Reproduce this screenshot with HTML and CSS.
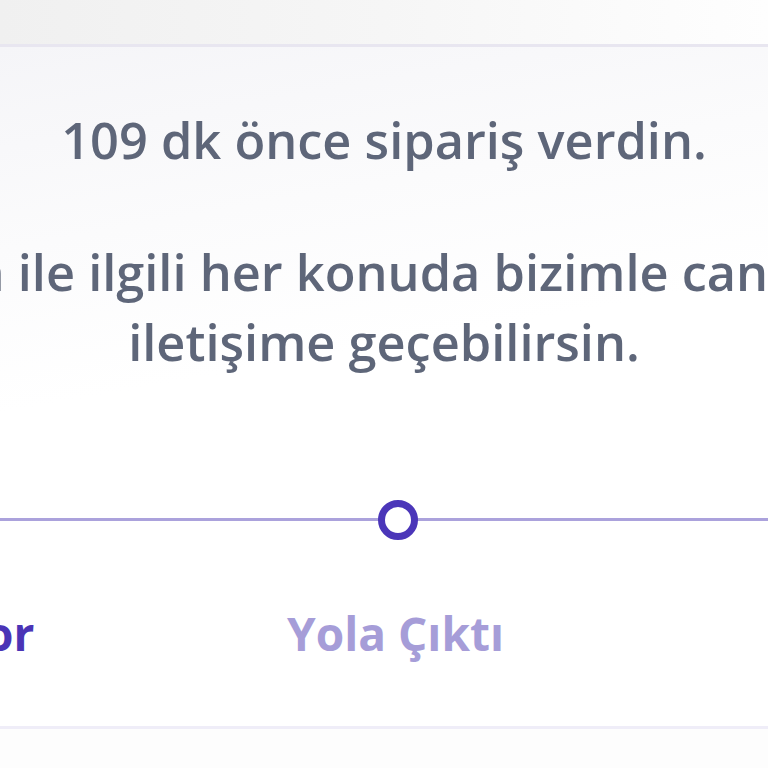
FILE: index.html
```html
<!DOCTYPE html>
<html lang="tr">
<head>
<meta charset="utf-8">
<link rel="stylesheet" href="styles.css">
</head>
<body>
<div class="page">
  <div class="topbar"></div>
  <section class="card">
    <div class="message">
      <p class="line first">109 dk önce sipariş verdin.</p>
      <p class="line second">Siparişin ile ilgili her konuda bizimle canlı destek</p>
      <p class="line third">iletişime geçebilirsin.</p>
    </div>
    <div class="timeline">
      <div class="track">
        <span class="node"></span>
      </div>
      <div class="labels">
        <span class="cell"><span class="label done">Hazırlanıyor</span></span>
        <span class="cell"><span class="label pending">Yola Çıktı</span></span>
        <span class="cell"></span>
      </div>
    </div>
  </section>
  <div class="bottom"></div>
</div>
</body>
</html>
```

FILE: styles.css
```css
html, body {
  margin: 0;
  padding: 0;
  width: 768px;
  height: 768px;
  overflow: hidden;
  background: #fdfdfd;
}
.page {
  width: 768px;
  height: 768px;
  display: flex;
  flex-direction: column;
  font-family: "Open Sans", "DejaVu Sans", sans-serif;
}
.topbar {
  height: 44px;
  flex: none;
  background: linear-gradient(90deg, #f0f0f0 0%, #f6f6f6 50%, #fefefe 100%);
  border-bottom: 3px solid #e8e6f0;
}
.card {
  height: 679px;
  flex: none;
  background: linear-gradient(170deg, #f5f5f8 0%, #fbfbfc 25%, #ffffff 45%, #ffffff 100%);
  border-bottom: 3px solid #efedf8;
  display: flex;
  flex-direction: column;
  align-items: center;
  overflow: hidden;
}
.message {
  display: flex;
  flex-direction: column;
  align-items: center;
  padding-top: 58px;
  color: #5e6679;
  font-weight: 600;
  font-size: 50.5px;
  line-height: 70px;
}
.line {
  margin: 0;
  white-space: nowrap;
}
.second {
  margin-top: 62px;
}
.timeline {
  width: 768px;
  margin-top: 141px;
  display: flex;
  flex-direction: column;
  align-items: center;
}
.track {
  width: 768px;
  height: 3px;
  background: #aba2dc;
  display: flex;
  justify-content: center;
  align-items: center;
}
.node {
  width: 26px;
  height: 26px;
  border: 7px solid #4b36b9;
  border-radius: 50%;
  background: #fff;
  flex: none;
  margin-left: 28px;
}
.labels {
  width: 768px;
  margin-top: 81px;
  padding-left: 23px;
  box-sizing: border-box;
  display: flex;
  justify-content: center;
  white-space: nowrap;
  font-size: 46px;
  font-weight: 700;
  line-height: 62px;
}
.cell {
  flex: none;
  width: 502px;
  text-align: center;
}
.done { color: #4a34b6; }
.pending { color: #a69dd8; }
.bottom {
  flex: 1;
  background: #fdfdfd;
}
```
